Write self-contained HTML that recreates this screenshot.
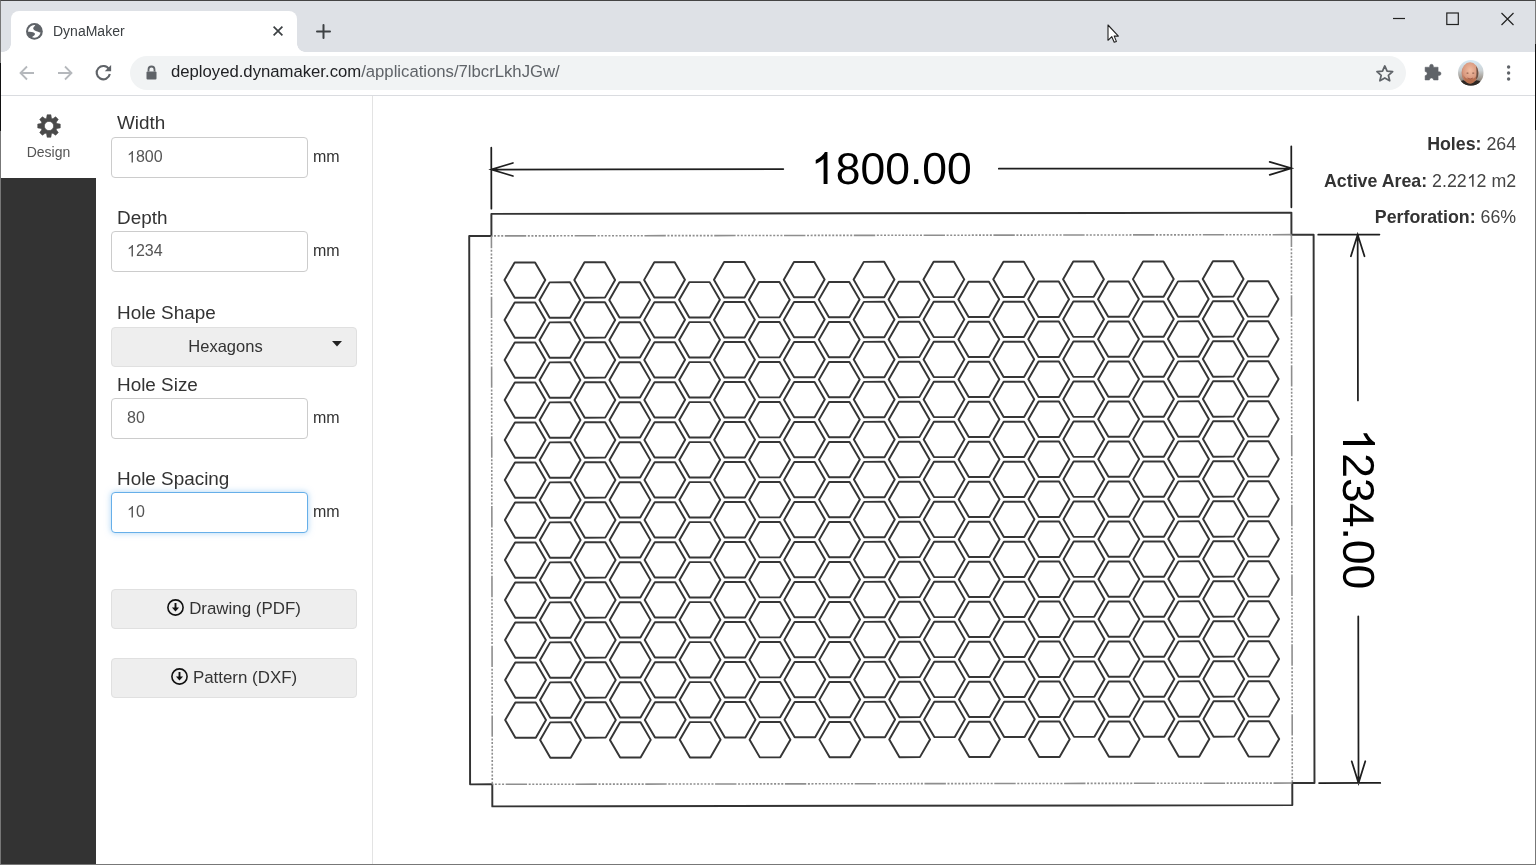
<!DOCTYPE html>
<html><head><meta charset="utf-8"><title>DynaMaker</title>
<style>
*{box-sizing:border-box;margin:0;padding:0}
html,body{width:1536px;height:865px;overflow:hidden;background:#fff;font-family:"Liberation Sans",sans-serif}
.abs{position:absolute}
#frame{position:absolute;left:0;top:0;width:1536px;height:865px;overflow:hidden}
#tabstrip{position:absolute;left:0;top:0;width:1536px;height:52px;background:#dee1e6}
#tab{position:absolute;left:11px;top:11px;width:286px;height:41px;background:#fff;border-radius:8px 8px 0 0}
#tab:before,#tab:after{content:"";position:absolute;bottom:0;width:8px;height:8px;background:radial-gradient(circle at 0 0,#dee1e6 8px,#fff 8.5px)}
#tab:before{left:-8px;background:radial-gradient(circle at 0 0,#dee1e6 7.5px,#fff 8px)}
#tab:after{right:-8px;background:radial-gradient(circle at 100% 0,#dee1e6 7.5px,#fff 8px)}
#tabtitle{position:absolute;left:43px;top:14px;font-size:14px;color:#3c4043}
#toolbar{position:absolute;left:0;top:52px;width:1536px;height:43px;background:#fff}
#tbline{position:absolute;left:0;top:95px;width:1536px;height:1px;background:#dadce0}
#omni{position:absolute;left:130px;top:56px;width:1276px;height:34px;background:#f1f3f4;border-radius:17px}
#url{position:absolute;left:171px;top:62px;font-size:16.7px;color:#202124;white-space:nowrap}
#url span{color:#5f6368}
#nav{position:absolute;left:0;top:96px;width:96px;height:769px;background:#333}
#navtop{position:absolute;left:0;top:96px;width:96px;height:82px;background:#fff}
#design{position:absolute;left:0;top:144px;width:97px;text-align:center;font-size:14px;color:#555}
#panel{position:absolute;left:96px;top:96px;width:277px;height:769px;background:#fff;border-right:1px solid #e3e3e3}
.lbl{position:absolute;left:117px;font-size:18.9px;color:#333;white-space:nowrap}
.inp{position:absolute;left:111px;width:197px;height:40.5px;border:1px solid #ccc;border-radius:4px;background:#fff}
.inp span{position:absolute;left:15px;top:10px;font-size:16px;color:#555}
.mm{position:absolute;left:313px;font-size:16px;color:#333;margin-top:1px}
.btn{position:absolute;left:111px;width:246px;height:40px;background:#eee;border:1px solid #e0e0e0;border-radius:4px;text-align:center;font-size:16.9px;color:#333}
#info{position:absolute;right:20px;top:126.3px;text-align:right;font-size:17.8px;color:#444;line-height:36.6px}
#info b{color:#333}
.drw{position:absolute;left:373px;top:96px}
.lbl,.mm,.inp span,.btn span,#info,#design,#url,#tabtitle{will-change:transform}
.one{display:inline-block;width:0.5561em;height:0.71875em;vertical-align:baseline;fill:currentColor;overflow:visible}
#wb{position:absolute;left:0;top:0;width:1536px;height:865px;border:1px solid #777;border-top-color:#444;pointer-events:none}
.bk{position:absolute;width:1px;background:#111}
</style></head><body><div id="frame">
<div id="tabstrip"></div>
<div id="tab"></div>
<svg class="abs" style="left:26px;top:22.8px" width="16.8" height="16.8" viewBox="0 0 16 16"><circle cx="8" cy="8" r="8" fill="#5f6368"/><path fill="#fff" d="M8.90 2.07A6 6 0 0 0 2.01 8.31C4 8.4 6.5 8.3 8.03 9.45C8.9 10.2 8.6 11.4 7.45 12.03C6.6 12.6 6.1 13 5.79 13.58A6 6 0 0 0 13.90 9.09C13.2 8.9 12.3 8.6 10.03 7.74C8.5 7.2 7.2 6.9 6.88 5.16C6.8 4.3 7.6 3.4 8.90 2.07Z"/></svg>
<div id="tabtitle" style="left:53px;top:23px">DynaMaker</div>
<svg class="abs" style="left:273px;top:26px" width="10" height="10" viewBox="0 0 10 10"><path d="M0.6 0.6L9.4 9.4M9.4 0.6L0.6 9.4" stroke="#3c4043" stroke-width="1.7"/></svg>
<svg class="abs" style="left:316px;top:23.8px" width="15" height="15" viewBox="0 0 15 15"><path d="M7.5 1V14M1 7.5H14" stroke="#3c4043" stroke-width="2" stroke-linecap="round"/></svg>
<svg class="abs" style="left:1390px;top:12px" width="130" height="16" viewBox="0 0 130 16"><path d="M3 6.5H15" stroke="#222" stroke-width="1.2"/><rect x="56.8" y="1" width="11.5" height="11.5" fill="none" stroke="#222" stroke-width="1.2"/><path d="M111.5 1L123.5 13M123.5 1L111.5 13" stroke="#222" stroke-width="1.2"/></svg>
<svg class="abs" style="left:1107.3px;top:24.1px" width="16" height="22" viewBox="0 0 16 22"><path d="M1 1V16.3L4.8 12.7 7.2 18.3 9.4 17.4 7.2 12.1H11.4Z" fill="#fff" stroke="#222" stroke-width="1.1" stroke-linejoin="round"/></svg>
<div id="toolbar"></div>
<div id="tbline"></div>
<svg class="abs" style="left:18px;top:64px" width="18" height="18" viewBox="0 0 18 18"><path d="M16 9H3M9 2.5L2.5 9 9 15.5" fill="none" stroke="#b5b8bc" stroke-width="1.8"/></svg>
<svg class="abs" style="left:56px;top:64px" width="18" height="18" viewBox="0 0 18 18"><path d="M2 9H15M9 2.5L15.5 9 9 15.5" fill="none" stroke="#b5b8bc" stroke-width="1.8"/></svg>
<svg class="abs" style="left:94.3px;top:63.4px" width="19" height="19" viewBox="0 0 18 18"><path d="M14.2 5.8A6.3 6.3 0 1 0 15 10.5" fill="none" stroke="#5f6368" stroke-width="2"/><path d="M16.2 1.8V7.8H10.2Z" fill="#5f6368"/></svg>
<div id="omni"></div>
<svg class="abs" style="left:145px;top:65px" width="13" height="16" viewBox="0 0 13 16"><path d="M3.5 6.5V4.5A3 3 0 0 1 9.5 4.5V6.5" fill="none" stroke="#5f6368" stroke-width="1.8"/><rect x="1.5" y="6.5" width="10" height="8" rx="1" fill="#5f6368"/></svg>
<div id="url">deployed.dynamaker.com<span>/applications/7lbcrLkhJGw/</span></div>
<svg class="abs" style="left:1374.5px;top:63.6px" width="19.6" height="19.6" viewBox="0 0 18 18"><path d="M9 1.8L11.1 6.6 16.2 7 12.3 10.4 13.5 15.4 9 12.8 4.5 15.4 5.7 10.4 1.8 7 6.9 6.6Z" fill="none" stroke="#5f6368" stroke-width="1.6" stroke-linejoin="round"/></svg>
<svg class="abs" style="left:1418px;top:58px" width="30" height="30" viewBox="0 0 30 30"><path d="M7.1 9.2H11.6V8.2A1.9 1.9 0 0 1 15.4 8.2V9.2H20.1V13.7H21.1A1.9 1.9 0 0 1 21.1 17.5H20.1V22H15.6A2.1 2.1 0 0 0 11.4 22H7.1V17.7A2.1 2.1 0 0 0 7.1 13.5Z" fill="#5f6368" stroke="#5f6368" stroke-width="0.5" stroke-linejoin="round"/></svg>
<svg class="abs" style="left:1457.9px;top:60.1px" width="25.7" height="25.7" viewBox="0 0 26 26"><defs><clipPath id="av"><circle cx="13" cy="13" r="13"/></clipPath><linearGradient id="avbg" x1="0" y1="0" x2="0" y2="1"><stop offset="0" stop-color="#d6eaf6"/><stop offset="0.4" stop-color="#cdd3d6"/><stop offset="0.7" stop-color="#a39c94"/><stop offset="1" stop-color="#57504a"/></linearGradient><radialGradient id="avf" cx="0.5" cy="0.38" r="0.62"><stop offset="0" stop-color="#f2bda2"/><stop offset="0.65" stop-color="#d99a80"/><stop offset="1" stop-color="#a96c58"/></radialGradient></defs><g clip-path="url(#av)"><rect width="26" height="26" fill="url(#avbg)"/><path d="M0 26C0.5 22 4 20.5 7 20.3L12 23 17 20.3C21 20.5 25 22 26 26Z" fill="#2e2824"/><ellipse cx="12.2" cy="13" rx="8.6" ry="10.6" fill="url(#avf)"/><path d="M5.5 15.5C6.5 21.5 9.5 24 12.3 24 15 24 18 21.5 19 15.5 17.5 18.8 15 19.3 12.3 19.3 9.5 19.3 7 18.8 5.5 15.5Z" fill="#b8704f"/><path d="M18.2 6C20.3 8.5 21 12.5 20.3 16.5 19.6 18.5 18.5 19.5 18 19.5 19 15.5 19 9.5 18.2 6Z" fill="#6a5044"/><ellipse cx="9.6" cy="13.2" rx="1.2" ry="0.6" fill="#8a5a48"/><ellipse cx="15.4" cy="13.2" rx="1.2" ry="0.6" fill="#8a5a48"/><path d="M9.5 18.3Q12.3 20 15.2 18.3" fill="none" stroke="#9a5040" stroke-width="0.8"/></g></svg>
<svg class="abs" style="left:1505px;top:64px" width="8" height="18" viewBox="0 0 8 18"><circle cx="3.6" cy="3" r="1.7" fill="#5f6368"/><circle cx="3.6" cy="9" r="1.7" fill="#5f6368"/><circle cx="3.6" cy="15" r="1.7" fill="#5f6368"/></svg>

<div id="nav"></div>
<div id="navtop"></div>
<svg class="abs" style="left:36.6px;top:113.5px" width="24" height="24" viewBox="0 0 24 24"><path fill="#4a4a4a" fill-rule="evenodd" stroke="#4a4a4a" stroke-width="0.6" stroke-linejoin="round" d="M9.60 4.16L10.12 0.76L13.88 0.76L14.40 4.16L15.85 4.76L18.62 2.72L21.28 5.38L19.24 8.15L19.84 9.60L23.24 10.12L23.24 13.88L19.84 14.40L19.24 15.85L21.28 18.62L18.62 21.28L15.85 19.24L14.40 19.84L13.88 23.24L10.12 23.24L9.60 19.84L8.15 19.24L5.38 21.28L2.72 18.62L4.76 15.85L4.16 14.40L0.76 13.88L0.76 10.12L4.16 9.60L4.76 8.15L2.72 5.38L5.38 2.72L8.15 4.76ZM12 7.4A4.6 4.6 0 1 0 12 16.6A4.6 4.6 0 1 0 12 7.4Z"/></svg>
<div id="design">Design</div>
<div id="panel"></div>
<div class="lbl" style="top:112px">Width</div>
<div class="inp" style="top:137px"><span><svg class="one" viewBox="0 -1472 1139 1472"><path transform="scale(1 -1)" d="M763 0H583V1147Q518 1085 412 1023 306 961 222 930V1104Q373 1175 486 1276 599 1377 646 1472H763Z"/></svg>800</span></div><div class="mm" style="top:147px">mm</div>
<div class="lbl" style="top:207px">Depth</div>
<div class="inp" style="top:231px"><span><svg class="one" viewBox="0 -1472 1139 1472"><path transform="scale(1 -1)" d="M763 0H583V1147Q518 1085 412 1023 306 961 222 930V1104Q373 1175 486 1276 599 1377 646 1472H763Z"/></svg>234</span></div><div class="mm" style="top:241px">mm</div>
<div class="lbl" style="top:302px">Hole Shape</div>
<div class="btn" style="top:327px;height:40px"><span style="position:absolute;left:0;right:17px;top:9px;font-size:16.5px">Hexagons</span><svg class="abs" style="left:220px;top:13px" width="10" height="6" viewBox="0 0 10 6"><path d="M0 0H10L5 5.5Z" fill="#222"/></svg></div>
<div class="lbl" style="top:374px">Hole Size</div>
<div class="inp" style="top:398px"><span>80</span></div><div class="mm" style="top:408px">mm</div>
<div class="lbl" style="top:468px">Hole Spacing</div>
<div class="inp" style="top:492px;border-color:#66afe9;box-shadow:0 0 6px rgba(102,175,233,.55)"><span><svg class="one" viewBox="0 -1472 1139 1472"><path transform="scale(1 -1)" d="M763 0H583V1147Q518 1085 412 1023 306 961 222 930V1104Q373 1175 486 1276 599 1377 646 1472H763Z"/></svg>0</span></div><div class="mm" style="top:502px">mm</div>
<div class="btn" style="top:589px"><span style="position:absolute;left:0;right:0;top:9px"><svg width="17" height="17" viewBox="0 0 17 17" style="vertical-align:-2px;margin-right:5px"><circle cx="8.5" cy="8.5" r="7.6" fill="none" stroke="#111" stroke-width="1.6"/><path d="M8.5 4V9" stroke="#111" stroke-width="1.9"/><path d="M4.9 8.6H12.1L8.5 12.6Z" fill="#111"/></svg>Drawing (PDF)</span></div>
<div class="btn" style="top:658px"><span style="position:absolute;left:0;right:0;top:9px"><svg width="17" height="17" viewBox="0 0 17 17" style="vertical-align:-2px;margin-right:5px"><circle cx="8.5" cy="8.5" r="7.6" fill="none" stroke="#111" stroke-width="1.6"/><path d="M8.5 4V9" stroke="#111" stroke-width="1.9"/><path d="M4.9 8.6H12.1L8.5 12.6Z" fill="#111"/></svg>Pattern (DXF)</span></div>
<svg class="drw" width="1163" height="769" viewBox="373 96 1163 769">
<g transform="translate(891.85 509.5) rotate(-0.09)">
<path d="M-387.00 -230.00L-376.80 -247.67L-356.40 -247.67L-346.20 -230.00L-356.40 -212.33L-376.80 -212.33ZM-352.09 -210.00L-341.89 -227.67L-321.49 -227.67L-311.29 -210.00L-321.49 -192.33L-341.89 -192.33ZM-387.00 -190.00L-376.80 -207.67L-356.40 -207.67L-346.20 -190.00L-356.40 -172.33L-376.80 -172.33ZM-352.09 -170.00L-341.89 -187.67L-321.49 -187.67L-311.29 -170.00L-321.49 -152.33L-341.89 -152.33ZM-387.00 -150.00L-376.80 -167.67L-356.40 -167.67L-346.20 -150.00L-356.40 -132.33L-376.80 -132.33ZM-352.09 -130.00L-341.89 -147.67L-321.49 -147.67L-311.29 -130.00L-321.49 -112.33L-341.89 -112.33ZM-387.00 -110.00L-376.80 -127.67L-356.40 -127.67L-346.20 -110.00L-356.40 -92.33L-376.80 -92.33ZM-352.09 -90.00L-341.89 -107.67L-321.49 -107.67L-311.29 -90.00L-321.49 -72.33L-341.89 -72.33ZM-387.00 -70.00L-376.80 -87.67L-356.40 -87.67L-346.20 -70.00L-356.40 -52.33L-376.80 -52.33ZM-352.09 -50.00L-341.89 -67.67L-321.49 -67.67L-311.29 -50.00L-321.49 -32.33L-341.89 -32.33ZM-387.00 -30.00L-376.80 -47.67L-356.40 -47.67L-346.20 -30.00L-356.40 -12.33L-376.80 -12.33ZM-352.09 -10.00L-341.89 -27.67L-321.49 -27.67L-311.29 -10.00L-321.49 7.67L-341.89 7.67ZM-387.00 10.00L-376.80 -7.67L-356.40 -7.67L-346.20 10.00L-356.40 27.67L-376.80 27.67ZM-352.09 30.00L-341.89 12.33L-321.49 12.33L-311.29 30.00L-321.49 47.67L-341.89 47.67ZM-387.00 50.00L-376.80 32.33L-356.40 32.33L-346.20 50.00L-356.40 67.67L-376.80 67.67ZM-352.09 70.00L-341.89 52.33L-321.49 52.33L-311.29 70.00L-321.49 87.67L-341.89 87.67ZM-387.00 90.00L-376.80 72.33L-356.40 72.33L-346.20 90.00L-356.40 107.67L-376.80 107.67ZM-352.09 110.00L-341.89 92.33L-321.49 92.33L-311.29 110.00L-321.49 127.67L-341.89 127.67ZM-387.00 130.00L-376.80 112.33L-356.40 112.33L-346.20 130.00L-356.40 147.67L-376.80 147.67ZM-352.09 150.00L-341.89 132.33L-321.49 132.33L-311.29 150.00L-321.49 167.67L-341.89 167.67ZM-387.00 170.00L-376.80 152.33L-356.40 152.33L-346.20 170.00L-356.40 187.67L-376.80 187.67ZM-352.09 190.00L-341.89 172.33L-321.49 172.33L-311.29 190.00L-321.49 207.67L-341.89 207.67ZM-387.00 210.00L-376.80 192.33L-356.40 192.33L-346.20 210.00L-356.40 227.67L-376.80 227.67ZM-352.09 230.00L-341.89 212.33L-321.49 212.33L-311.29 230.00L-321.49 247.67L-341.89 247.67ZM-317.18 -230.00L-306.98 -247.67L-286.58 -247.67L-276.38 -230.00L-286.58 -212.33L-306.98 -212.33ZM-282.26 -210.00L-272.06 -227.67L-251.66 -227.67L-241.46 -210.00L-251.66 -192.33L-272.06 -192.33ZM-317.18 -190.00L-306.98 -207.67L-286.58 -207.67L-276.38 -190.00L-286.58 -172.33L-306.98 -172.33ZM-282.26 -170.00L-272.06 -187.67L-251.66 -187.67L-241.46 -170.00L-251.66 -152.33L-272.06 -152.33ZM-317.18 -150.00L-306.98 -167.67L-286.58 -167.67L-276.38 -150.00L-286.58 -132.33L-306.98 -132.33ZM-282.26 -130.00L-272.06 -147.67L-251.66 -147.67L-241.46 -130.00L-251.66 -112.33L-272.06 -112.33ZM-317.18 -110.00L-306.98 -127.67L-286.58 -127.67L-276.38 -110.00L-286.58 -92.33L-306.98 -92.33ZM-282.26 -90.00L-272.06 -107.67L-251.66 -107.67L-241.46 -90.00L-251.66 -72.33L-272.06 -72.33ZM-317.18 -70.00L-306.98 -87.67L-286.58 -87.67L-276.38 -70.00L-286.58 -52.33L-306.98 -52.33ZM-282.26 -50.00L-272.06 -67.67L-251.66 -67.67L-241.46 -50.00L-251.66 -32.33L-272.06 -32.33ZM-317.18 -30.00L-306.98 -47.67L-286.58 -47.67L-276.38 -30.00L-286.58 -12.33L-306.98 -12.33ZM-282.26 -10.00L-272.06 -27.67L-251.66 -27.67L-241.46 -10.00L-251.66 7.67L-272.06 7.67ZM-317.18 10.00L-306.98 -7.67L-286.58 -7.67L-276.38 10.00L-286.58 27.67L-306.98 27.67ZM-282.26 30.00L-272.06 12.33L-251.66 12.33L-241.46 30.00L-251.66 47.67L-272.06 47.67ZM-317.18 50.00L-306.98 32.33L-286.58 32.33L-276.38 50.00L-286.58 67.67L-306.98 67.67ZM-282.26 70.00L-272.06 52.33L-251.66 52.33L-241.46 70.00L-251.66 87.67L-272.06 87.67ZM-317.18 90.00L-306.98 72.33L-286.58 72.33L-276.38 90.00L-286.58 107.67L-306.98 107.67ZM-282.26 110.00L-272.06 92.33L-251.66 92.33L-241.46 110.00L-251.66 127.67L-272.06 127.67ZM-317.18 130.00L-306.98 112.33L-286.58 112.33L-276.38 130.00L-286.58 147.67L-306.98 147.67ZM-282.26 150.00L-272.06 132.33L-251.66 132.33L-241.46 150.00L-251.66 167.67L-272.06 167.67ZM-317.18 170.00L-306.98 152.33L-286.58 152.33L-276.38 170.00L-286.58 187.67L-306.98 187.67ZM-282.26 190.00L-272.06 172.33L-251.66 172.33L-241.46 190.00L-251.66 207.67L-272.06 207.67ZM-317.18 210.00L-306.98 192.33L-286.58 192.33L-276.38 210.00L-286.58 227.67L-306.98 227.67ZM-282.26 230.00L-272.06 212.33L-251.66 212.33L-241.46 230.00L-251.66 247.67L-272.06 247.67ZM-247.35 -230.00L-237.15 -247.67L-216.75 -247.67L-206.55 -230.00L-216.75 -212.33L-237.15 -212.33ZM-212.44 -210.00L-202.24 -227.67L-181.84 -227.67L-171.64 -210.00L-181.84 -192.33L-202.24 -192.33ZM-247.35 -190.00L-237.15 -207.67L-216.75 -207.67L-206.55 -190.00L-216.75 -172.33L-237.15 -172.33ZM-212.44 -170.00L-202.24 -187.67L-181.84 -187.67L-171.64 -170.00L-181.84 -152.33L-202.24 -152.33ZM-247.35 -150.00L-237.15 -167.67L-216.75 -167.67L-206.55 -150.00L-216.75 -132.33L-237.15 -132.33ZM-212.44 -130.00L-202.24 -147.67L-181.84 -147.67L-171.64 -130.00L-181.84 -112.33L-202.24 -112.33ZM-247.35 -110.00L-237.15 -127.67L-216.75 -127.67L-206.55 -110.00L-216.75 -92.33L-237.15 -92.33ZM-212.44 -90.00L-202.24 -107.67L-181.84 -107.67L-171.64 -90.00L-181.84 -72.33L-202.24 -72.33ZM-247.35 -70.00L-237.15 -87.67L-216.75 -87.67L-206.55 -70.00L-216.75 -52.33L-237.15 -52.33ZM-212.44 -50.00L-202.24 -67.67L-181.84 -67.67L-171.64 -50.00L-181.84 -32.33L-202.24 -32.33ZM-247.35 -30.00L-237.15 -47.67L-216.75 -47.67L-206.55 -30.00L-216.75 -12.33L-237.15 -12.33ZM-212.44 -10.00L-202.24 -27.67L-181.84 -27.67L-171.64 -10.00L-181.84 7.67L-202.24 7.67ZM-247.35 10.00L-237.15 -7.67L-216.75 -7.67L-206.55 10.00L-216.75 27.67L-237.15 27.67ZM-212.44 30.00L-202.24 12.33L-181.84 12.33L-171.64 30.00L-181.84 47.67L-202.24 47.67ZM-247.35 50.00L-237.15 32.33L-216.75 32.33L-206.55 50.00L-216.75 67.67L-237.15 67.67ZM-212.44 70.00L-202.24 52.33L-181.84 52.33L-171.64 70.00L-181.84 87.67L-202.24 87.67ZM-247.35 90.00L-237.15 72.33L-216.75 72.33L-206.55 90.00L-216.75 107.67L-237.15 107.67ZM-212.44 110.00L-202.24 92.33L-181.84 92.33L-171.64 110.00L-181.84 127.67L-202.24 127.67ZM-247.35 130.00L-237.15 112.33L-216.75 112.33L-206.55 130.00L-216.75 147.67L-237.15 147.67ZM-212.44 150.00L-202.24 132.33L-181.84 132.33L-171.64 150.00L-181.84 167.67L-202.24 167.67ZM-247.35 170.00L-237.15 152.33L-216.75 152.33L-206.55 170.00L-216.75 187.67L-237.15 187.67ZM-212.44 190.00L-202.24 172.33L-181.84 172.33L-171.64 190.00L-181.84 207.67L-202.24 207.67ZM-247.35 210.00L-237.15 192.33L-216.75 192.33L-206.55 210.00L-216.75 227.67L-237.15 227.67ZM-212.44 230.00L-202.24 212.33L-181.84 212.33L-171.64 230.00L-181.84 247.67L-202.24 247.67ZM-177.53 -230.00L-167.32 -247.67L-146.93 -247.67L-136.72 -230.00L-146.93 -212.33L-167.32 -212.33ZM-142.61 -210.00L-132.41 -227.67L-112.01 -227.67L-101.81 -210.00L-112.01 -192.33L-132.41 -192.33ZM-177.53 -190.00L-167.32 -207.67L-146.93 -207.67L-136.72 -190.00L-146.93 -172.33L-167.32 -172.33ZM-142.61 -170.00L-132.41 -187.67L-112.01 -187.67L-101.81 -170.00L-112.01 -152.33L-132.41 -152.33ZM-177.53 -150.00L-167.32 -167.67L-146.93 -167.67L-136.72 -150.00L-146.93 -132.33L-167.32 -132.33ZM-142.61 -130.00L-132.41 -147.67L-112.01 -147.67L-101.81 -130.00L-112.01 -112.33L-132.41 -112.33ZM-177.53 -110.00L-167.32 -127.67L-146.93 -127.67L-136.72 -110.00L-146.93 -92.33L-167.32 -92.33ZM-142.61 -90.00L-132.41 -107.67L-112.01 -107.67L-101.81 -90.00L-112.01 -72.33L-132.41 -72.33ZM-177.53 -70.00L-167.32 -87.67L-146.93 -87.67L-136.72 -70.00L-146.93 -52.33L-167.32 -52.33ZM-142.61 -50.00L-132.41 -67.67L-112.01 -67.67L-101.81 -50.00L-112.01 -32.33L-132.41 -32.33ZM-177.53 -30.00L-167.32 -47.67L-146.93 -47.67L-136.72 -30.00L-146.93 -12.33L-167.32 -12.33ZM-142.61 -10.00L-132.41 -27.67L-112.01 -27.67L-101.81 -10.00L-112.01 7.67L-132.41 7.67ZM-177.53 10.00L-167.32 -7.67L-146.93 -7.67L-136.72 10.00L-146.93 27.67L-167.32 27.67ZM-142.61 30.00L-132.41 12.33L-112.01 12.33L-101.81 30.00L-112.01 47.67L-132.41 47.67ZM-177.53 50.00L-167.32 32.33L-146.93 32.33L-136.72 50.00L-146.93 67.67L-167.32 67.67ZM-142.61 70.00L-132.41 52.33L-112.01 52.33L-101.81 70.00L-112.01 87.67L-132.41 87.67ZM-177.53 90.00L-167.32 72.33L-146.93 72.33L-136.72 90.00L-146.93 107.67L-167.32 107.67ZM-142.61 110.00L-132.41 92.33L-112.01 92.33L-101.81 110.00L-112.01 127.67L-132.41 127.67ZM-177.53 130.00L-167.32 112.33L-146.93 112.33L-136.72 130.00L-146.93 147.67L-167.32 147.67ZM-142.61 150.00L-132.41 132.33L-112.01 132.33L-101.81 150.00L-112.01 167.67L-132.41 167.67ZM-177.53 170.00L-167.32 152.33L-146.93 152.33L-136.72 170.00L-146.93 187.67L-167.32 187.67ZM-142.61 190.00L-132.41 172.33L-112.01 172.33L-101.81 190.00L-112.01 207.67L-132.41 207.67ZM-177.53 210.00L-167.32 192.33L-146.93 192.33L-136.72 210.00L-146.93 227.67L-167.32 227.67ZM-142.61 230.00L-132.41 212.33L-112.01 212.33L-101.81 230.00L-112.01 247.67L-132.41 247.67ZM-107.70 -230.00L-97.50 -247.67L-77.10 -247.67L-66.90 -230.00L-77.10 -212.33L-97.50 -212.33ZM-72.79 -210.00L-62.59 -227.67L-42.19 -227.67L-31.99 -210.00L-42.19 -192.33L-62.59 -192.33ZM-107.70 -190.00L-97.50 -207.67L-77.10 -207.67L-66.90 -190.00L-77.10 -172.33L-97.50 -172.33ZM-72.79 -170.00L-62.59 -187.67L-42.19 -187.67L-31.99 -170.00L-42.19 -152.33L-62.59 -152.33ZM-107.70 -150.00L-97.50 -167.67L-77.10 -167.67L-66.90 -150.00L-77.10 -132.33L-97.50 -132.33ZM-72.79 -130.00L-62.59 -147.67L-42.19 -147.67L-31.99 -130.00L-42.19 -112.33L-62.59 -112.33ZM-107.70 -110.00L-97.50 -127.67L-77.10 -127.67L-66.90 -110.00L-77.10 -92.33L-97.50 -92.33ZM-72.79 -90.00L-62.59 -107.67L-42.19 -107.67L-31.99 -90.00L-42.19 -72.33L-62.59 -72.33ZM-107.70 -70.00L-97.50 -87.67L-77.10 -87.67L-66.90 -70.00L-77.10 -52.33L-97.50 -52.33ZM-72.79 -50.00L-62.59 -67.67L-42.19 -67.67L-31.99 -50.00L-42.19 -32.33L-62.59 -32.33ZM-107.70 -30.00L-97.50 -47.67L-77.10 -47.67L-66.90 -30.00L-77.10 -12.33L-97.50 -12.33ZM-72.79 -10.00L-62.59 -27.67L-42.19 -27.67L-31.99 -10.00L-42.19 7.67L-62.59 7.67ZM-107.70 10.00L-97.50 -7.67L-77.10 -7.67L-66.90 10.00L-77.10 27.67L-97.50 27.67ZM-72.79 30.00L-62.59 12.33L-42.19 12.33L-31.99 30.00L-42.19 47.67L-62.59 47.67ZM-107.70 50.00L-97.50 32.33L-77.10 32.33L-66.90 50.00L-77.10 67.67L-97.50 67.67ZM-72.79 70.00L-62.59 52.33L-42.19 52.33L-31.99 70.00L-42.19 87.67L-62.59 87.67ZM-107.70 90.00L-97.50 72.33L-77.10 72.33L-66.90 90.00L-77.10 107.67L-97.50 107.67ZM-72.79 110.00L-62.59 92.33L-42.19 92.33L-31.99 110.00L-42.19 127.67L-62.59 127.67ZM-107.70 130.00L-97.50 112.33L-77.10 112.33L-66.90 130.00L-77.10 147.67L-97.50 147.67ZM-72.79 150.00L-62.59 132.33L-42.19 132.33L-31.99 150.00L-42.19 167.67L-62.59 167.67ZM-107.70 170.00L-97.50 152.33L-77.10 152.33L-66.90 170.00L-77.10 187.67L-97.50 187.67ZM-72.79 190.00L-62.59 172.33L-42.19 172.33L-31.99 190.00L-42.19 207.67L-62.59 207.67ZM-107.70 210.00L-97.50 192.33L-77.10 192.33L-66.90 210.00L-77.10 227.67L-97.50 227.67ZM-72.79 230.00L-62.59 212.33L-42.19 212.33L-31.99 230.00L-42.19 247.67L-62.59 247.67ZM-37.88 -230.00L-27.68 -247.67L-7.28 -247.67L2.92 -230.00L-7.28 -212.33L-27.68 -212.33ZM-2.96 -210.00L7.24 -227.67L27.64 -227.67L37.84 -210.00L27.64 -192.33L7.24 -192.33ZM-37.88 -190.00L-27.68 -207.67L-7.28 -207.67L2.92 -190.00L-7.28 -172.33L-27.68 -172.33ZM-2.96 -170.00L7.24 -187.67L27.64 -187.67L37.84 -170.00L27.64 -152.33L7.24 -152.33ZM-37.88 -150.00L-27.68 -167.67L-7.28 -167.67L2.92 -150.00L-7.28 -132.33L-27.68 -132.33ZM-2.96 -130.00L7.24 -147.67L27.64 -147.67L37.84 -130.00L27.64 -112.33L7.24 -112.33ZM-37.88 -110.00L-27.68 -127.67L-7.28 -127.67L2.92 -110.00L-7.28 -92.33L-27.68 -92.33ZM-2.96 -90.00L7.24 -107.67L27.64 -107.67L37.84 -90.00L27.64 -72.33L7.24 -72.33ZM-37.88 -70.00L-27.68 -87.67L-7.28 -87.67L2.92 -70.00L-7.28 -52.33L-27.68 -52.33ZM-2.96 -50.00L7.24 -67.67L27.64 -67.67L37.84 -50.00L27.64 -32.33L7.24 -32.33ZM-37.88 -30.00L-27.68 -47.67L-7.28 -47.67L2.92 -30.00L-7.28 -12.33L-27.68 -12.33ZM-2.96 -10.00L7.24 -27.67L27.64 -27.67L37.84 -10.00L27.64 7.67L7.24 7.67ZM-37.88 10.00L-27.68 -7.67L-7.28 -7.67L2.92 10.00L-7.28 27.67L-27.68 27.67ZM-2.96 30.00L7.24 12.33L27.64 12.33L37.84 30.00L27.64 47.67L7.24 47.67ZM-37.88 50.00L-27.68 32.33L-7.28 32.33L2.92 50.00L-7.28 67.67L-27.68 67.67ZM-2.96 70.00L7.24 52.33L27.64 52.33L37.84 70.00L27.64 87.67L7.24 87.67ZM-37.88 90.00L-27.68 72.33L-7.28 72.33L2.92 90.00L-7.28 107.67L-27.68 107.67ZM-2.96 110.00L7.24 92.33L27.64 92.33L37.84 110.00L27.64 127.67L7.24 127.67ZM-37.88 130.00L-27.68 112.33L-7.28 112.33L2.92 130.00L-7.28 147.67L-27.68 147.67ZM-2.96 150.00L7.24 132.33L27.64 132.33L37.84 150.00L27.64 167.67L7.24 167.67ZM-37.88 170.00L-27.68 152.33L-7.28 152.33L2.92 170.00L-7.28 187.67L-27.68 187.67ZM-2.96 190.00L7.24 172.33L27.64 172.33L37.84 190.00L27.64 207.67L7.24 207.67ZM-37.88 210.00L-27.68 192.33L-7.28 192.33L2.92 210.00L-7.28 227.67L-27.68 227.67ZM-2.96 230.00L7.24 212.33L27.64 212.33L37.84 230.00L27.64 247.67L7.24 247.67ZM31.95 -230.00L42.15 -247.67L62.55 -247.67L72.75 -230.00L62.55 -212.33L42.15 -212.33ZM66.86 -210.00L77.06 -227.67L97.46 -227.67L107.66 -210.00L97.46 -192.33L77.06 -192.33ZM31.95 -190.00L42.15 -207.67L62.55 -207.67L72.75 -190.00L62.55 -172.33L42.15 -172.33ZM66.86 -170.00L77.06 -187.67L97.46 -187.67L107.66 -170.00L97.46 -152.33L77.06 -152.33ZM31.95 -150.00L42.15 -167.67L62.55 -167.67L72.75 -150.00L62.55 -132.33L42.15 -132.33ZM66.86 -130.00L77.06 -147.67L97.46 -147.67L107.66 -130.00L97.46 -112.33L77.06 -112.33ZM31.95 -110.00L42.15 -127.67L62.55 -127.67L72.75 -110.00L62.55 -92.33L42.15 -92.33ZM66.86 -90.00L77.06 -107.67L97.46 -107.67L107.66 -90.00L97.46 -72.33L77.06 -72.33ZM31.95 -70.00L42.15 -87.67L62.55 -87.67L72.75 -70.00L62.55 -52.33L42.15 -52.33ZM66.86 -50.00L77.06 -67.67L97.46 -67.67L107.66 -50.00L97.46 -32.33L77.06 -32.33ZM31.95 -30.00L42.15 -47.67L62.55 -47.67L72.75 -30.00L62.55 -12.33L42.15 -12.33ZM66.86 -10.00L77.06 -27.67L97.46 -27.67L107.66 -10.00L97.46 7.67L77.06 7.67ZM31.95 10.00L42.15 -7.67L62.55 -7.67L72.75 10.00L62.55 27.67L42.15 27.67ZM66.86 30.00L77.06 12.33L97.46 12.33L107.66 30.00L97.46 47.67L77.06 47.67ZM31.95 50.00L42.15 32.33L62.55 32.33L72.75 50.00L62.55 67.67L42.15 67.67ZM66.86 70.00L77.06 52.33L97.46 52.33L107.66 70.00L97.46 87.67L77.06 87.67ZM31.95 90.00L42.15 72.33L62.55 72.33L72.75 90.00L62.55 107.67L42.15 107.67ZM66.86 110.00L77.06 92.33L97.46 92.33L107.66 110.00L97.46 127.67L77.06 127.67ZM31.95 130.00L42.15 112.33L62.55 112.33L72.75 130.00L62.55 147.67L42.15 147.67ZM66.86 150.00L77.06 132.33L97.46 132.33L107.66 150.00L97.46 167.67L77.06 167.67ZM31.95 170.00L42.15 152.33L62.55 152.33L72.75 170.00L62.55 187.67L42.15 187.67ZM66.86 190.00L77.06 172.33L97.46 172.33L107.66 190.00L97.46 207.67L77.06 207.67ZM31.95 210.00L42.15 192.33L62.55 192.33L72.75 210.00L62.55 227.67L42.15 227.67ZM66.86 230.00L77.06 212.33L97.46 212.33L107.66 230.00L97.46 247.67L77.06 247.67ZM101.78 -230.00L111.98 -247.67L132.38 -247.67L142.58 -230.00L132.38 -212.33L111.98 -212.33ZM136.69 -210.00L146.89 -227.67L167.29 -227.67L177.49 -210.00L167.29 -192.33L146.89 -192.33ZM101.78 -190.00L111.98 -207.67L132.38 -207.67L142.58 -190.00L132.38 -172.33L111.98 -172.33ZM136.69 -170.00L146.89 -187.67L167.29 -187.67L177.49 -170.00L167.29 -152.33L146.89 -152.33ZM101.78 -150.00L111.98 -167.67L132.38 -167.67L142.58 -150.00L132.38 -132.33L111.98 -132.33ZM136.69 -130.00L146.89 -147.67L167.29 -147.67L177.49 -130.00L167.29 -112.33L146.89 -112.33ZM101.78 -110.00L111.98 -127.67L132.38 -127.67L142.58 -110.00L132.38 -92.33L111.98 -92.33ZM136.69 -90.00L146.89 -107.67L167.29 -107.67L177.49 -90.00L167.29 -72.33L146.89 -72.33ZM101.78 -70.00L111.98 -87.67L132.38 -87.67L142.58 -70.00L132.38 -52.33L111.98 -52.33ZM136.69 -50.00L146.89 -67.67L167.29 -67.67L177.49 -50.00L167.29 -32.33L146.89 -32.33ZM101.78 -30.00L111.98 -47.67L132.38 -47.67L142.58 -30.00L132.38 -12.33L111.98 -12.33ZM136.69 -10.00L146.89 -27.67L167.29 -27.67L177.49 -10.00L167.29 7.67L146.89 7.67ZM101.78 10.00L111.98 -7.67L132.38 -7.67L142.58 10.00L132.38 27.67L111.98 27.67ZM136.69 30.00L146.89 12.33L167.29 12.33L177.49 30.00L167.29 47.67L146.89 47.67ZM101.78 50.00L111.98 32.33L132.38 32.33L142.58 50.00L132.38 67.67L111.98 67.67ZM136.69 70.00L146.89 52.33L167.29 52.33L177.49 70.00L167.29 87.67L146.89 87.67ZM101.78 90.00L111.98 72.33L132.38 72.33L142.58 90.00L132.38 107.67L111.98 107.67ZM136.69 110.00L146.89 92.33L167.29 92.33L177.49 110.00L167.29 127.67L146.89 127.67ZM101.78 130.00L111.98 112.33L132.38 112.33L142.58 130.00L132.38 147.67L111.98 147.67ZM136.69 150.00L146.89 132.33L167.29 132.33L177.49 150.00L167.29 167.67L146.89 167.67ZM101.78 170.00L111.98 152.33L132.38 152.33L142.58 170.00L132.38 187.67L111.98 187.67ZM136.69 190.00L146.89 172.33L167.29 172.33L177.49 190.00L167.29 207.67L146.89 207.67ZM101.78 210.00L111.98 192.33L132.38 192.33L142.58 210.00L132.38 227.67L111.98 227.67ZM136.69 230.00L146.89 212.33L167.29 212.33L177.49 230.00L167.29 247.67L146.89 247.67ZM171.60 -230.00L181.80 -247.67L202.20 -247.67L212.40 -230.00L202.20 -212.33L181.80 -212.33ZM206.51 -210.00L216.71 -227.67L237.11 -227.67L247.31 -210.00L237.11 -192.33L216.71 -192.33ZM171.60 -190.00L181.80 -207.67L202.20 -207.67L212.40 -190.00L202.20 -172.33L181.80 -172.33ZM206.51 -170.00L216.71 -187.67L237.11 -187.67L247.31 -170.00L237.11 -152.33L216.71 -152.33ZM171.60 -150.00L181.80 -167.67L202.20 -167.67L212.40 -150.00L202.20 -132.33L181.80 -132.33ZM206.51 -130.00L216.71 -147.67L237.11 -147.67L247.31 -130.00L237.11 -112.33L216.71 -112.33ZM171.60 -110.00L181.80 -127.67L202.20 -127.67L212.40 -110.00L202.20 -92.33L181.80 -92.33ZM206.51 -90.00L216.71 -107.67L237.11 -107.67L247.31 -90.00L237.11 -72.33L216.71 -72.33ZM171.60 -70.00L181.80 -87.67L202.20 -87.67L212.40 -70.00L202.20 -52.33L181.80 -52.33ZM206.51 -50.00L216.71 -67.67L237.11 -67.67L247.31 -50.00L237.11 -32.33L216.71 -32.33ZM171.60 -30.00L181.80 -47.67L202.20 -47.67L212.40 -30.00L202.20 -12.33L181.80 -12.33ZM206.51 -10.00L216.71 -27.67L237.11 -27.67L247.31 -10.00L237.11 7.67L216.71 7.67ZM171.60 10.00L181.80 -7.67L202.20 -7.67L212.40 10.00L202.20 27.67L181.80 27.67ZM206.51 30.00L216.71 12.33L237.11 12.33L247.31 30.00L237.11 47.67L216.71 47.67ZM171.60 50.00L181.80 32.33L202.20 32.33L212.40 50.00L202.20 67.67L181.80 67.67ZM206.51 70.00L216.71 52.33L237.11 52.33L247.31 70.00L237.11 87.67L216.71 87.67ZM171.60 90.00L181.80 72.33L202.20 72.33L212.40 90.00L202.20 107.67L181.80 107.67ZM206.51 110.00L216.71 92.33L237.11 92.33L247.31 110.00L237.11 127.67L216.71 127.67ZM171.60 130.00L181.80 112.33L202.20 112.33L212.40 130.00L202.20 147.67L181.80 147.67ZM206.51 150.00L216.71 132.33L237.11 132.33L247.31 150.00L237.11 167.67L216.71 167.67ZM171.60 170.00L181.80 152.33L202.20 152.33L212.40 170.00L202.20 187.67L181.80 187.67ZM206.51 190.00L216.71 172.33L237.11 172.33L247.31 190.00L237.11 207.67L216.71 207.67ZM171.60 210.00L181.80 192.33L202.20 192.33L212.40 210.00L202.20 227.67L181.80 227.67ZM206.51 230.00L216.71 212.33L237.11 212.33L247.31 230.00L237.11 247.67L216.71 247.67ZM241.43 -230.00L251.63 -247.67L272.03 -247.67L282.23 -230.00L272.03 -212.33L251.63 -212.33ZM276.34 -210.00L286.54 -227.67L306.94 -227.67L317.14 -210.00L306.94 -192.33L286.54 -192.33ZM241.43 -190.00L251.63 -207.67L272.03 -207.67L282.23 -190.00L272.03 -172.33L251.63 -172.33ZM276.34 -170.00L286.54 -187.67L306.94 -187.67L317.14 -170.00L306.94 -152.33L286.54 -152.33ZM241.43 -150.00L251.63 -167.67L272.03 -167.67L282.23 -150.00L272.03 -132.33L251.63 -132.33ZM276.34 -130.00L286.54 -147.67L306.94 -147.67L317.14 -130.00L306.94 -112.33L286.54 -112.33ZM241.43 -110.00L251.63 -127.67L272.03 -127.67L282.23 -110.00L272.03 -92.33L251.63 -92.33ZM276.34 -90.00L286.54 -107.67L306.94 -107.67L317.14 -90.00L306.94 -72.33L286.54 -72.33ZM241.43 -70.00L251.63 -87.67L272.03 -87.67L282.23 -70.00L272.03 -52.33L251.63 -52.33ZM276.34 -50.00L286.54 -67.67L306.94 -67.67L317.14 -50.00L306.94 -32.33L286.54 -32.33ZM241.43 -30.00L251.63 -47.67L272.03 -47.67L282.23 -30.00L272.03 -12.33L251.63 -12.33ZM276.34 -10.00L286.54 -27.67L306.94 -27.67L317.14 -10.00L306.94 7.67L286.54 7.67ZM241.43 10.00L251.63 -7.67L272.03 -7.67L282.23 10.00L272.03 27.67L251.63 27.67ZM276.34 30.00L286.54 12.33L306.94 12.33L317.14 30.00L306.94 47.67L286.54 47.67ZM241.43 50.00L251.63 32.33L272.03 32.33L282.23 50.00L272.03 67.67L251.63 67.67ZM276.34 70.00L286.54 52.33L306.94 52.33L317.14 70.00L306.94 87.67L286.54 87.67ZM241.43 90.00L251.63 72.33L272.03 72.33L282.23 90.00L272.03 107.67L251.63 107.67ZM276.34 110.00L286.54 92.33L306.94 92.33L317.14 110.00L306.94 127.67L286.54 127.67ZM241.43 130.00L251.63 112.33L272.03 112.33L282.23 130.00L272.03 147.67L251.63 147.67ZM276.34 150.00L286.54 132.33L306.94 132.33L317.14 150.00L306.94 167.67L286.54 167.67ZM241.43 170.00L251.63 152.33L272.03 152.33L282.23 170.00L272.03 187.67L251.63 187.67ZM276.34 190.00L286.54 172.33L306.94 172.33L317.14 190.00L306.94 207.67L286.54 207.67ZM241.43 210.00L251.63 192.33L272.03 192.33L282.23 210.00L272.03 227.67L251.63 227.67ZM276.34 230.00L286.54 212.33L306.94 212.33L317.14 230.00L306.94 247.67L286.54 247.67ZM311.25 -230.00L321.45 -247.67L341.85 -247.67L352.05 -230.00L341.85 -212.33L321.45 -212.33ZM346.16 -210.00L356.36 -227.67L376.76 -227.67L386.96 -210.00L376.76 -192.33L356.36 -192.33ZM311.25 -190.00L321.45 -207.67L341.85 -207.67L352.05 -190.00L341.85 -172.33L321.45 -172.33ZM346.16 -170.00L356.36 -187.67L376.76 -187.67L386.96 -170.00L376.76 -152.33L356.36 -152.33ZM311.25 -150.00L321.45 -167.67L341.85 -167.67L352.05 -150.00L341.85 -132.33L321.45 -132.33ZM346.16 -130.00L356.36 -147.67L376.76 -147.67L386.96 -130.00L376.76 -112.33L356.36 -112.33ZM311.25 -110.00L321.45 -127.67L341.85 -127.67L352.05 -110.00L341.85 -92.33L321.45 -92.33ZM346.16 -90.00L356.36 -107.67L376.76 -107.67L386.96 -90.00L376.76 -72.33L356.36 -72.33ZM311.25 -70.00L321.45 -87.67L341.85 -87.67L352.05 -70.00L341.85 -52.33L321.45 -52.33ZM346.16 -50.00L356.36 -67.67L376.76 -67.67L386.96 -50.00L376.76 -32.33L356.36 -32.33ZM311.25 -30.00L321.45 -47.67L341.85 -47.67L352.05 -30.00L341.85 -12.33L321.45 -12.33ZM346.16 -10.00L356.36 -27.67L376.76 -27.67L386.96 -10.00L376.76 7.67L356.36 7.67ZM311.25 10.00L321.45 -7.67L341.85 -7.67L352.05 10.00L341.85 27.67L321.45 27.67ZM346.16 30.00L356.36 12.33L376.76 12.33L386.96 30.00L376.76 47.67L356.36 47.67ZM311.25 50.00L321.45 32.33L341.85 32.33L352.05 50.00L341.85 67.67L321.45 67.67ZM346.16 70.00L356.36 52.33L376.76 52.33L386.96 70.00L376.76 87.67L356.36 87.67ZM311.25 90.00L321.45 72.33L341.85 72.33L352.05 90.00L341.85 107.67L321.45 107.67ZM346.16 110.00L356.36 92.33L376.76 92.33L386.96 110.00L376.76 127.67L356.36 127.67ZM311.25 130.00L321.45 112.33L341.85 112.33L352.05 130.00L341.85 147.67L321.45 147.67ZM346.16 150.00L356.36 132.33L376.76 132.33L386.96 150.00L376.76 167.67L356.36 167.67ZM311.25 170.00L321.45 152.33L341.85 152.33L352.05 170.00L341.85 187.67L321.45 187.67ZM346.16 190.00L356.36 172.33L376.76 172.33L386.96 190.00L376.76 207.67L356.36 207.67ZM311.25 210.00L321.45 192.33L341.85 192.33L352.05 210.00L341.85 227.67L321.45 227.67ZM346.16 230.00L356.36 212.33L376.76 212.33L386.96 230.00L376.76 247.67L356.36 247.67Z" fill="none" stroke="#363636" stroke-width="1.95" stroke-linejoin="round"/>
<path d="M-400 -296.25H400V-274.2H422.2V274.2H400V296.25H-400V274.2H-422.2V-274.2H-400Z" fill="none" stroke="#333" stroke-width="1.95" stroke-linejoin="round"/>
<path d="M-400 -274.2H400M-400 274.2H400" fill="none" stroke="#8e8e8e" stroke-width="1.6" stroke-dasharray="21.4 1.6 2 1.6 2 1.6 2 1.6 2 1.6 2 1.6 2 1.6 2 1.6 2 1.6 2 1.6 2 1.6 2 1.6 2 1.6 2 1.6" stroke-dashoffset="56.4"/>
<path d="M-400 -274.2V274.2M400 -274.2V274.2" fill="none" stroke="#8e8e8e" stroke-width="1.6" stroke-dasharray="21.4 1.6 2 1.6 2 1.6 2 1.6 2 1.6 2 1.6 2 1.6 2 1.6 2 1.6 2 1.6 2 1.6 2 1.6 2 1.6 2 1.6" stroke-dashoffset="9.1"/>
<g stroke="#1e1e1e" stroke-width="1.75" fill="none" stroke-linecap="round">
<path d="M-400 -362.5V-301.5M400 -362.5V-301.5M-400 -340.6H-108M107.5 -340.6H400M-378.4 -347.1L-400 -340.6L-378.4 -334.1M378.4 -347.1L400 -340.6L378.4 -334.1"/>
<path d="M426.8 -274.2H488M426.8 274.2H488M466.25 -274.2V-108.3M466.25 107.5V274.2M459.45 -252.5L466.25 -274.2L473.05 -252.5M459.45 252.5L466.25 274.2L473.05 252.5"/>
</g>
</g>
</svg>
<svg class="drw" style="will-change:transform" width="1163" height="769" viewBox="373 96 1163 769">
<g transform="translate(891.85 509.5) rotate(-0.09)">
<text x="-55.66" y="-325.6" font-family="Liberation Sans" font-size="44.5" fill="#000">800.00</text>
<path transform="translate(-80.4 -325.6) scale(0.021729 -0.021729)" d="M763 0H583V1147Q518 1085 412 1023 306 961 222 930V1104Q373 1175 486 1276 599 1377 646 1472H763Z" fill="#000"/>
<g transform="translate(451.25 0) rotate(90)">
<text x="-55.66" y="0" font-family="Liberation Sans" font-size="44.5" fill="#000">234.00</text>
<path transform="translate(-80.4 0) scale(0.021729 -0.021729)" d="M763 0H583V1147Q518 1085 412 1023 306 961 222 930V1104Q373 1175 486 1276 599 1377 646 1472H763Z" fill="#000"/>
</g>
</g>
</svg>
<div id="info"><b>Holes:</b> 264<br><b>Active Area:</b> 2.22<svg class="one" viewBox="0 -1472 1139 1472"><path transform="scale(1 -1)" d="M763 0H583V1147Q518 1085 412 1023 306 961 222 930V1104Q373 1175 486 1276 599 1377 646 1472H763Z"/></svg>2 m2<br><b>Perforation:</b> 66%</div>
<div id="wb"></div><div class="bk" style="left:0;top:63px;height:68px"></div><div class="bk" style="left:1535px;top:44px;height:86px"></div>
</div></body></html>
